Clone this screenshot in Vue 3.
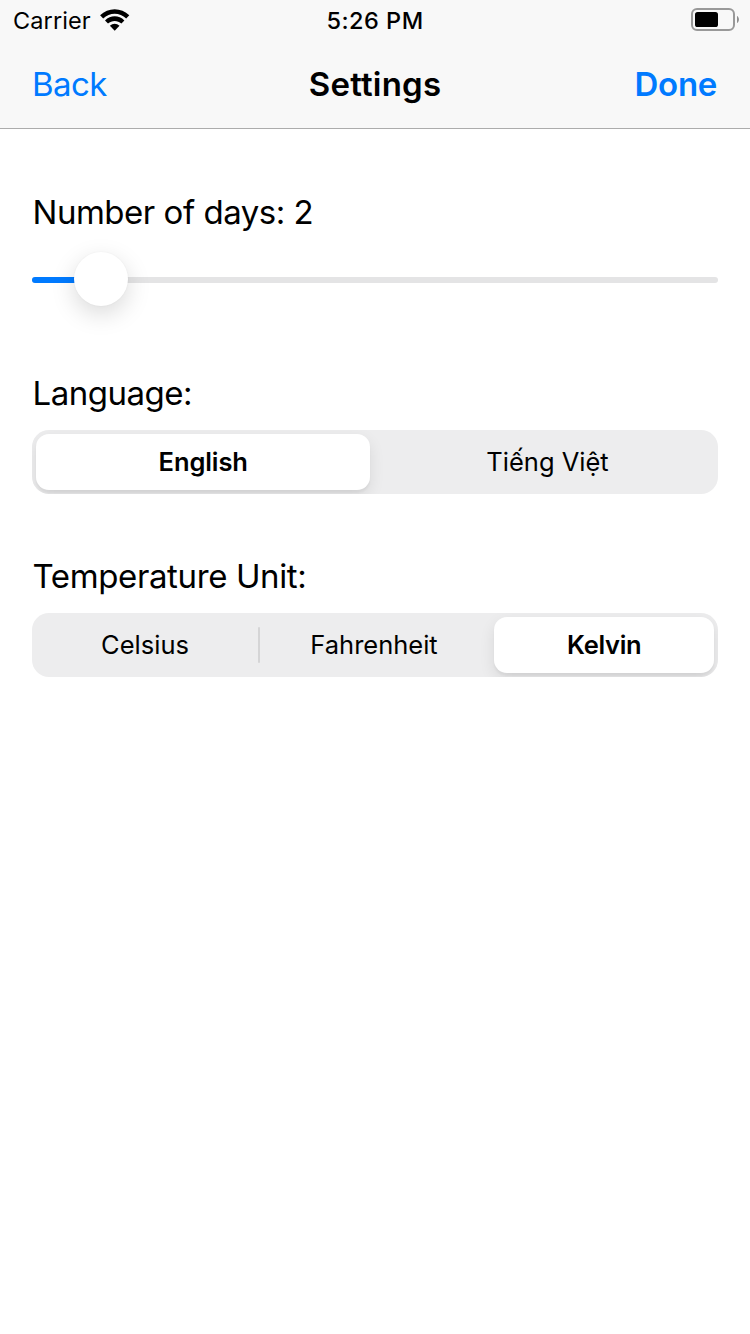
<script setup>
import { ref } from 'vue'

const minDays = 1
const maxDays = 11
const days = ref(2)

const languages = ['English', 'Tiếng Việt']
const language = ref('English')

const units = ['Celsius', 'Fahrenheit', 'Kelvin']
const unit = ref('Kelvin')

const fillPercent = () => ((days.value - minDays) / (maxDays - minDays)) * 100
const showDivider = (list, i, selected) =>
  i < list.length - 1 && list[i] !== selected && list[i + 1] !== selected
</script>

<template>
  <div class="screen">
    <header class="header">
      <div class="status">
        <div class="status-left">
          <span class="carrier">Carrier</span>
          <svg class="wifi" width="30" height="22" viewBox="0 0 30 22">
            <path d="M0.1 6.2C8.1-1.8 21.3-1.8 29.3 6.2L26.2 9.4C19.8 3.1 9.6 3.1 3.2 9.4Z" />
            <path d="M5 11.4C10.6 6 18.8 6 24.4 11.4L21.4 14.6C17.6 11 11.8 11 8 14.6Z" />
            <path d="M9.9 16.7C12.7 14 16.7 14 19.5 16.7L14.7 21.7Z" />
          </svg>
        </div>
        <span class="time">5:26 PM</span>
        <div class="status-right">
          <svg class="battery" width="50" height="24" viewBox="0 0 50 24">
            <rect x="2" y="1" width="42" height="21" rx="5" fill="none" stroke="#999" stroke-width="2" />
            <rect x="5" y="4" width="23" height="15" rx="2.6" />
            <path d="M47 8C49.6 9.3 49.6 13.7 47 15Z" fill="#8e8e8e" />
          </svg>
        </div>
      </div>
      <nav class="nav">
        <a class="back">Back</a>
        <h1 class="title">Settings</h1>
        <a class="done">Done</a>
      </nav>
    </header>

    <main class="content">
      <section class="group days-group">
        <label class="label days-label">Number of days: {{ days }}</label>
        <div class="slider">
          <div class="track">
            <div class="fill" :style="{ width: fillPercent() + '%' }"></div>
            <div class="knob" :style="{ left: fillPercent() + '%' }"></div>
          </div>
        </div>
      </section>

      <section class="group language-group">
        <label class="label language-label">Language:</label>
        <div class="segments two">
          <button
            v-for="item in languages"
            :key="item"
            :class="['segment', { selected: item === language }]"
            @click="language = item"
          >{{ item }}</button>
        </div>
      </section>

      <section class="group">
        <label class="label unit-label">Temperature Unit:</label>
        <div class="segments three">
          <button
            v-for="(item, i) in units"
            :key="item"
            :class="['segment', { selected: item === unit, divided: showDivider(units, i, unit) }]"
            @click="unit = item"
          >{{ item }}</button>
        </div>
      </section>
    </main>
  </div>
</template>

<style>
body {
  background: #fff;
}
</style>

<style scoped>
.screen {
  box-sizing: border-box;
  height: 1334px;
  overflow: hidden;
  background: #fff;
  color: #000;
  font-family: Inter, "Liberation Sans", sans-serif;
}
.header {
  box-sizing: border-box;
  height: 129px;
  background: #f8f8f8;
  border-bottom: 1px solid #acacac;
}
.status {
  display: grid;
  grid-template-columns: 1fr auto 1fr;
  height: 40px;
  align-items: center;
  font-size: 23.5px;
  line-height: 40px;
}
.status-left {
  display: flex;
  align-items: center;
  padding-left: 13px;
}
.carrier {
  width: 87px;
  padding-top: 2px;
  line-height: 38px;
  letter-spacing: 0.1px;
}
.wifi {
  display: block;
}
.time {
  padding-top: 2px;
  line-height: 38px;
  font-weight: 500;
  letter-spacing: 0.5px;
}
.status-right {
  display: flex;
  justify-content: flex-end;
  padding-right: 10px;
}
.battery {
  display: block;
}
.nav {
  display: grid;
  grid-template-columns: 1fr auto 1fr;
  height: 88px;
  padding: 0 32px;
  font-size: 33px;
  line-height: 88px;
}
.back,
.done {
  color: #007aff;
}
.back {
  letter-spacing: -0.6px;
}
.done {
  padding-right: 1px;
  text-align: right;
  font-weight: 600;
  letter-spacing: -0.3px;
}
.title {
  margin: 0;
  font-size: inherit;
  font-weight: 600;
  letter-spacing: 0.2px;
}
.content {
  padding: 61px 32px 0;
}
.group {
  display: flex;
  flex-direction: column;
}
.label {
  height: 44px;
  padding-left: 0.5px;
  font-size: 33px;
  line-height: 44px;
  letter-spacing: -0.48px;
  white-space: nowrap;
}
.unit-label {
  letter-spacing: -0.38px;
}
.days-group {
  height: 181px;
}
.language-group {
  height: 183px;
}
.slider {
  padding-top: 43px;
}
.track {
  position: relative;
  height: 6px;
  border-radius: 3px;
  background: #e4e4e5;
}
.fill {
  height: 6px;
  border-radius: 3px;
  background: #007aff;
}
.knob {
  position: absolute;
  top: -25px;
  width: 54px;
  height: 54px;
  margin-left: -26.6px;
  border-radius: 50%;
  background: #fff;
  box-shadow: 0 8px 24px rgba(0, 0, 0, 0.15), 0 0 2px rgba(0, 0, 0, 0.05);
}
.segments {
  display: grid;
  height: 64px;
  box-sizing: border-box;
  margin-top: 15px;
  padding: 4px;
  border-radius: 17px;
  background: #ededee;
  overflow: hidden;
}
.two {
  grid-template-columns: repeat(2, 1fr);
  column-gap: 10px;
}
.three {
  grid-template-columns: repeat(3, 1fr);
  column-gap: 9px;
}
.segment {
  position: relative;
  padding: 0;
  border: 0;
  border-radius: 13px;
  background: transparent;
  color: #000;
  font-family: inherit;
  font-size: 25.5px;
  line-height: 56px;
}
.three .segment:not(.selected) {
  padding-right: 2px;
}
.two .segment:not(.selected) {
  padding-left: 1px;
}
.selected {
  padding-left: 0.5px;
  background: #fff;
  font-weight: 600;
  letter-spacing: -0.1px;
  box-shadow: 0 6px 16px rgba(0, 0, 0, 0.09), 0 3px 2px rgba(0, 0, 0, 0.04);
}
.three .selected {
  letter-spacing: -0.3px;
}
.divided::after {
  content: "";
  position: absolute;
  top: 10px;
  right: -4px;
  width: 2px;
  height: 36px;
  border-radius: 1px;
  background: #d5d5d6;
}
</style>
